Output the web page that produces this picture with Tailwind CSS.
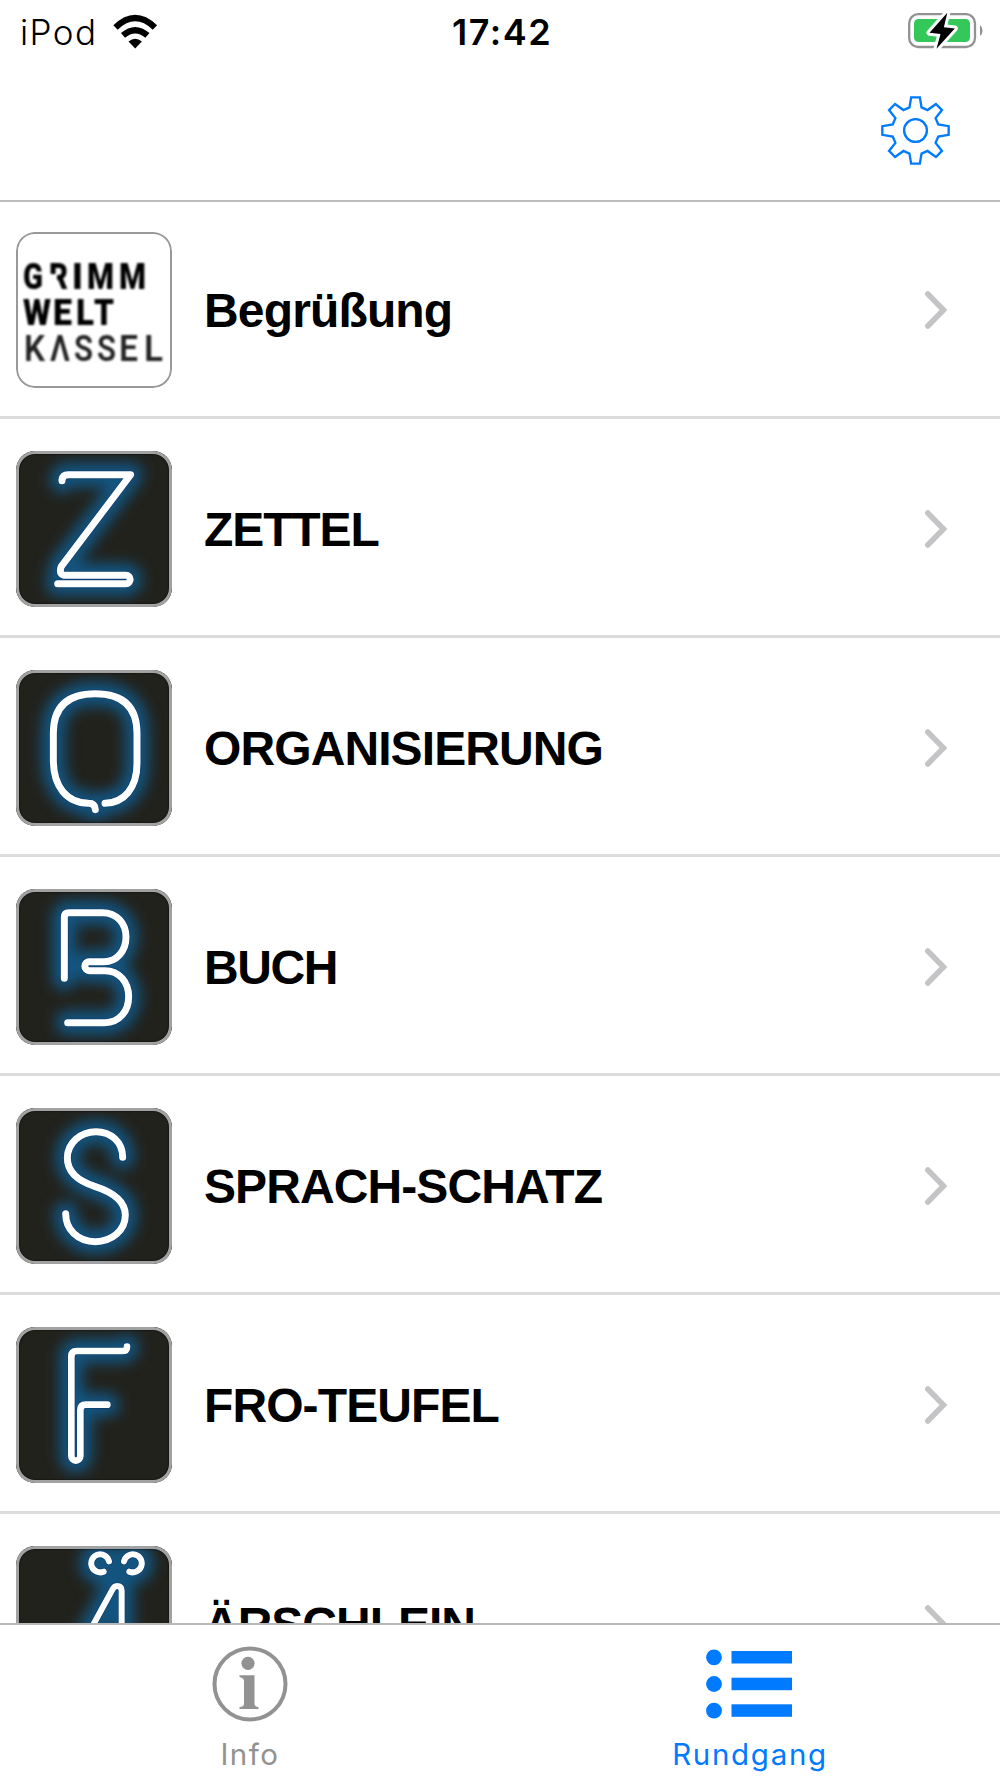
<!DOCTYPE html>
<html lang="de">
<head>
  <meta charset="UTF-8">
  <meta name="viewport" content="width=device-width, initial-scale=1.0">
  <script src="https://cdn.jsdelivr.net/npm/@tailwindcss/browser@4"></script>
  <title>Rundgang</title>
</head>
<body class="bg-white">
  <div class="w-[1000px] h-[1778px] flex flex-col overflow-hidden bg-white text-black">

    <!-- Status bar -->
    <div class="h-[62px] shrink-0 grid grid-cols-3 pl-[20px] pr-[16px] font-['Inter',sans-serif]">
      <div class="flex items-start">
        <span class="text-[35px] leading-[42px] pt-[11px] tracking-[1.4px] w-[92px] shrink-0 font-[350]">iPod</span>
        <svg class="w-[46px] h-[36px] mt-[13px] shrink-0" viewBox="103 13 46 36">
          <g fill="none" stroke="#000" stroke-width="6.3">
            <path d="M106.500 27.400 Q126.200 8.500 145.900 27.400"/>
            <path d="M114 35.400 Q126.200 25 138.400 35.400"/>
          </g>
          <path d="M119.500 41.600 Q126.200 36 132.900 41.600 L126.200 48.400Z"/>
        </svg>
      </div>
      <div class="text-center text-[36px] leading-[42px] pt-[11px] tracking-[1.500px] font-semibold">17:42</div>
      <div class="flex justify-end">
        <svg class="w-[78px] h-[40px] mt-[11px]" viewBox="906 11 78 40">
          <rect x="909.200" y="14.200" width="65.800" height="32.800" rx="9" fill="none" stroke="#929292" stroke-width="2.300"/>
          <rect x="914" y="19" width="56" height="23" rx="4.500" fill="#34c759"/>
          <path d="M980 25 Q982.600 27 982.600 30.500 Q982.600 34 980 36Z" fill="#929292"/>
          <path d="M947.300 12.700 L929.500 32.800 L940.500 34 L936.500 48.700 L954.800 28.400 L943.900 27.300Z" fill="#000" stroke="#fff" stroke-width="6" stroke-linejoin="round" paint-order="stroke"/>
        </svg>
      </div>
    </div>

    <!-- Navigation bar -->
    <header class="h-[140px] shrink-0 border-b-2 border-[#bcbcbc] flex justify-end pr-[49px] pt-[33px]">
      <svg class="w-[71px] h-[71px]" viewBox="-106 -106 212 212" fill="none" stroke="#007aff" stroke-width="7">
        <path d="M-13 -99 L13 -99 L18 -69 L36 -61 L61 -79 L79 -61 L60 -37 L68 -18 L99 -13 L99 13 L68 18 L60 37 L79 61 L61 79 L36 61 L18 69 L13 99 L-13 99 L-18 69 L-36 61 L-61 79 L-79 61 L-60 37 L-68 18 L-99 13 L-99 -13 L-68 -18 L-60 -37 L-79 -61 L-61 -79 L-36 -61 L-18 -69Z"/>
        <circle r="34"/>
      </svg>
    </header>

    <!-- Stations -->
    <main id="stations" class="h-[1423px] shrink-0 overflow-hidden -mt-[2px]"></main>

    <!-- Tab bar -->
    <footer class="grow border-t-2 border-[#b8b8b8] bg-white grid grid-cols-2 font-['Inter',sans-serif] text-[29.500px] leading-[36px]">
      <a class="flex flex-col items-center text-[#929292] pt-[21px]">
        <svg class="w-[76px] h-[76px]" viewBox="212 1646 76 76">
          <circle cx="250" cy="1684" r="35.500" fill="none" stroke="currentColor" stroke-width="4"/>
          <circle cx="248" cy="1663.300" r="6.600" fill="currentColor"/>
          <path d="M239.500 1675.300 H254.500 V1704 Q254.500 1706.500 258.500 1707.300 V1709 H239.500 V1707.300 Q244 1706.500 244 1704 V1681 Q244 1678 239.500 1677Z" fill="currentColor"/>
        </svg>
        <span class="mt-[14px] tracking-[1.500px]">Info</span>
      </a>
      <a class="flex flex-col items-center text-[#007aff] pt-[21px]">
        <svg class="w-[88px] h-[76px]" viewBox="706 1646 88 76" fill="currentColor">
          <circle cx="714" cy="1657.300" r="7.900"/>
          <circle cx="714" cy="1684" r="7.900"/>
          <circle cx="714" cy="1710.700" r="7.900"/>
          <rect x="731.500" y="1651" width="60.500" height="12.500"/>
          <rect x="731.500" y="1677.700" width="60.500" height="12.500"/>
          <rect x="731.500" y="1704.300" width="60.500" height="12.500"/>
        </svg>
        <span class="mt-[14px] tracking-[1.700px]">Rundgang</span>
      </a>
    </footer>
  </div>

  <script>
    // Each neon letter is one tube path, drawn blurred for the glow and sharp on top
    const stations = [
      { title: 'Begrüßung', spacing: -0.85 },
      { title: 'ZETTEL', spacing: -1.1, box: '48 63 468 468', width: 21,
        tube: 'M186 152 V149 Q188 134 204 134 H392 L184 409 Q174 436 198 436 H378 A12.500 12.500 0 0 1 378 461 H173' },
      { title: 'ORGANISIERUNG', spacing: -0.9, box: '48 60 468 468', width: 21,
        tube: 'M286 479 Q285 460 266 460 C200 458 160 410 160 330 V250 C160 170 203 131 286 131 C369 131 411 170 411 250 V340 C411 415 372 458 315 460' },
      { title: 'BUCH', spacing: -1.4, box: '48 57 468 468', width: 21,
        tube: 'M193 325 V142 Q193 128 207 128 H307 C350 128 378 160 378 201 C378 243 350 275 312 275 H268 A13.500 13.500 0 0 0 268 302 H315 C358 302 386 337 386 380 C386 423 358 458 315 458 H203' },
      { title: 'SPRACH-SCHATZ', spacing: -0.9, box: '48 54 468 468', width: 21,
        tube: 'M368 202 C368 156 333 125 288 125 C240 125 202 160 202 204 C202 245 235 273 284 289 C340 307 376 334 376 375 C376 422 335 455 286 455 C233 455 197 418 197 371' },
      { title: 'FRO-TEUFEL', spacing: -0.9, box: '48 51 468 468', width: 20,
        tube: 'M381 110 Q381 123 366 123 H230 Q214 123 214 139 V438 A13.500 14 0 0 0 241 438 V300 Q241 284 257 284 H322' },
      { title: 'ÄRSCHLEIN', spacing: -1, box: '48 138 468 468', width: 18,
        tube: 'M327 184 A27 27 0 1 0 311 215 M372 184 A27 27 0 1 1 388 215 M220 484 L336 271 Q342 258 351 258 Q365 258 365 272 V500' },
    ];

    const logo = `
      <svg class="w-[156px] h-[156px] blur-[1px] font-['Roboto',sans-serif]" viewBox="0 0 156 156" font-size="36">
        <g font-weight="900">
          <text x="7" y="57" textLength="20" lengthAdjust="spacingAndGlyphs">G</text>
          <text x="33" y="57" textLength="19" lengthAdjust="spacingAndGlyphs">R</text>
          <rect x="33" y="42" width="8" height="17" fill="#fff"/>
          <text x="56" y="57">I</text>
          <text x="71" y="57" textLength="27" lengthAdjust="spacingAndGlyphs">M</text>
          <text x="103" y="57" textLength="27" lengthAdjust="spacingAndGlyphs">M</text>
          <text x="7" y="93" textLength="28" lengthAdjust="spacingAndGlyphs">W</text>
          <text x="37" y="93" textLength="19" lengthAdjust="spacingAndGlyphs">E</text>
          <text x="60" y="93" textLength="18" lengthAdjust="spacingAndGlyphs">L</text>
          <text x="78" y="93" textLength="20" lengthAdjust="spacingAndGlyphs">T</text>
        </g>
        <g font-weight="600" fill="#222">
          <text x="8" y="128.500" textLength="21" lengthAdjust="spacingAndGlyphs">K</text>
          <text x="34" y="128.500" textLength="20" lengthAdjust="spacingAndGlyphs">Λ</text>
          <text x="58" y="128.500" textLength="19" lengthAdjust="spacingAndGlyphs">S</text>
          <text x="81" y="128.500" textLength="19" lengthAdjust="spacingAndGlyphs">S</text>
          <text x="103" y="128.500" textLength="19" lengthAdjust="spacingAndGlyphs">E</text>
          <text x="128" y="128.500" textLength="19" lengthAdjust="spacingAndGlyphs">L</text>
        </g>
      </svg>`;

    const neon = s => `
      <svg class="w-[156px] h-[156px]" viewBox="${s.box}" fill="none" stroke-linecap="round" stroke-linejoin="round">
        <path class="blur-[20px]" d="${s.tube}" stroke="#0f629a" stroke-opacity="0.8" stroke-width="72"/>
        <path class="blur-[2px]" d="${s.tube}" stroke="#0a3a70" stroke-opacity="0.8" stroke-width="${s.width + 4}"/>
        <path d="${s.tube}" stroke="#fff" stroke-width="${s.width}"/>
      </svg>`;

    document.getElementById('stations').innerHTML = stations.map(s => `
      <div class="h-[219px] flex items-start pl-4 pt-[32px] pr-[52px] border-b-3 border-[#dcdcdc]">
        <div class="w-[156px] h-[156px] shrink-0 relative rounded-[19px] overflow-hidden ${s.tube ? 'bg-[#22221c]' : 'bg-white'}">
          ${s.tube ? neon(s) : logo}
          <div class="absolute inset-0 rounded-[19px] ${s.tube ? 'border-3 border-[#a2a2a2] inset-shadow-[0_0_2px_#000]' : 'border-2 border-[#999]'}"></div>
        </div>
        <span class="ml-[32px] mt-[52px] grow font-['Liberation_Sans',Arial,sans-serif] font-bold text-[48px] leading-[54px] whitespace-nowrap" style="letter-spacing: ${s.spacing}px">${s.title}</span>
        <svg class="w-[24px] h-[40px] mt-[58px]" viewBox="924 290 24 40" fill="none" stroke="#c4c4c6" stroke-width="5.500" stroke-linecap="round">
          <path d="M927.800 294 L943.500 310 L927.800 326"/>
        </svg>
      </div>
    `).join('');
  </script>
</body>
</html>
